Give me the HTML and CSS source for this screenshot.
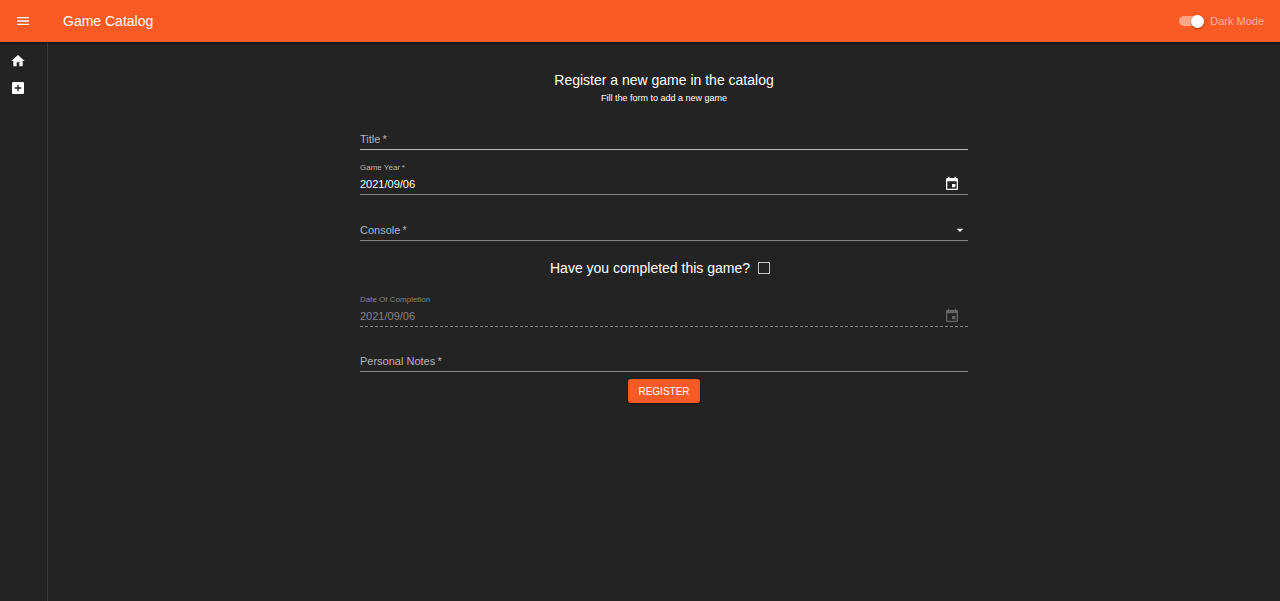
FILE: index.html
```html
<!DOCTYPE html>
<html lang="en">
<head>
<meta charset="utf-8">
<meta name="viewport" content="width=device-width, initial-scale=1">
<title>Game Catalog</title>
<link rel="stylesheet" href="styles.css">
</head>
<body>
<header class="appbar">
  <button class="icon-button" type="button" aria-label="Open menu">
    <svg class="icon" viewBox="0 0 24 24"><path d="M3 18h18v-2H3v2zm0-5h18v-2H3v2zm0-7v2h18V6H3z"/></svg>
  </button>
  <h1 class="appbar-title">Game Catalog</h1>
  <label class="mode"><input class="switch" type="checkbox" role="switch" checked><span>Dark Mode</span></label>
</header>
<div class="layout">
  <nav class="drawer" aria-label="Main">
    <a class="drawer-link" href="#home" aria-label="Home">
      <svg class="icon" viewBox="0 0 24 24"><path d="M10 20v-6h4v6h5v-8h3L12 3 2 12h3v8z"/></svg>
    </a>
    <a class="drawer-link" href="#add" aria-label="Add game">
      <svg class="icon" viewBox="0 0 24 24"><path d="M19 3H5c-1.110 0-2 .9-2 2v14c0 1.100.890 2 2 2h14c1.100 0 2-.9 2-2V5c0-1.100-.9-2-2-2zm-2 10h-4v4h-2v-4H7v-2h4V7h2v4h4v2z"/></svg>
    </a>
  </nav>
  <main class="content">
    <h2 class="heading">Register a new game in the catalog</h2>
    <p class="subtitle">Fill the form to add a new game</p>
    <form class="form">
      <div class="field field-strong">
        <label class="resting-label" for="title">Title&thinsp;*</label>
        <input class="control" id="title" type="text">
      </div>
      <div class="field field-date">
        <label class="small-label" for="year">Game Year&thinsp;*</label>
        <input class="control" id="year" type="text" value="2021/09/06">
        <button class="calendar" type="button" aria-label="Choose date">
          <svg class="icon" viewBox="0 0 24 24"><path d="M17 12h-5v5h5v-5zM16 1v2H8V1H6v2H5c-1.110 0-1.990.9-1.990 2L3 19c0 1.100.890 2 2 2h14c1.100 0 2-.9 2-2V5c0-1.100-.9-2-2-2h-1V1h-2zm3 18H5V8h14v11z"/></svg>
        </button>
      </div>
      <div class="field">
        <label class="resting-label" for="console">Console&thinsp;*</label>
        <select class="control" id="console"><option></option></select>
        <svg class="icon arrow" viewBox="0 0 24 24"><path d="M7 10l5 5 5-5z"/></svg>
      </div>
      <div class="completed">
        <label for="completed">Have you completed this game?</label>
        <input class="checkbox" id="completed" type="checkbox">
      </div>
      <div class="field field-date field-disabled">
        <label class="small-label" for="completion">Date Of Completion</label>
        <input class="control" id="completion" type="text" value="2021/09/06" disabled>
        <button class="calendar" type="button" aria-label="Choose date" disabled>
          <svg class="icon" viewBox="0 0 24 24"><path d="M17 12h-5v5h5v-5zM16 1v2H8V1H6v2H5c-1.110 0-1.990.9-1.990 2L3 19c0 1.100.890 2 2 2h14c1.100 0 2-.9 2-2V5c0-1.100-.9-2-2-2h-1V1h-2zm3 18H5V8h14v11z"/></svg>
        </button>
      </div>
      <div class="field field-date">
        <label class="resting-label" for="notes">Personal Notes&thinsp;*</label>
        <input class="control" id="notes" type="text">
      </div>
      <button class="submit" type="submit">REGISTER</button>
    </form>
  </main>
</div>
</body>
</html>
```
FILE: styles.css
```css
* { box-sizing: border-box; }
body {
  margin: 0;
  min-height: 100vh;
  display: flex;
  flex-direction: column;
  background: #232323;
  color: #fff;
  font-family: "Liberation Sans", Arial, sans-serif;
  font-size: 11px;
}
button, input, select { font: inherit; color: inherit; }
button { border: 0; padding: 0; background: none; cursor: pointer; }
.icon { display: block; width: 16px; height: 16px; fill: currentColor; }

.appbar {
  display: flex;
  align-items: center;
  height: 42px;
  padding: 0 16px 0 15px;
  background: #fa5a23;
  box-shadow: 0 1px 3px rgba(0, 0, 0, .6);
  z-index: 1;
}
.appbar-title {
  margin: 0 auto 0 32px;
  font-size: 14px;
  font-weight: 400;
}
.mode { display: flex; align-items: center; gap: 6px; color: #fdb498; }
.switch {
  appearance: none;
  display: flex;
  align-items: center;
  justify-content: flex-end;
  width: 25px;
  height: 10px;
  margin: 0;
  border-radius: 5px;
  background: #fda586;
}
.switch::before {
  content: "";
  width: 13px;
  height: 13px;
  flex: none;
  border-radius: 50%;
  background: #fff;
  box-shadow: 0 1px 2px rgba(0, 0, 0, .4);
}

.layout { display: flex; flex: 1; }
.drawer {
  width: 48px;
  padding: 5px 0 0 10px;
  border-right: 1px solid #3a3a3a;
}
.drawer-link { display: flex; align-items: center; height: 27px; color: #fff; }
.content {
  flex: 1;
  display: flex;
  flex-direction: column;
  align-items: center;
  padding-top: 28px;
}
.heading { margin: 0; font-size: 14px; font-weight: 400; line-height: 20px; }
.subtitle { margin: 2px 0 0; font-size: 9px; line-height: 12px; }
.form {
  width: 50%;
  padding: 0 4px;
  display: flex;
  flex-direction: column;
}
.field {
  display: grid;
  grid-template-columns: 1fr auto;
  grid-template-rows: 11px 20px;
  margin-top: 14px;
  border-bottom: 1px solid #858585;
}
.field-strong { border-color: #b8b8b8; }
.field-date { margin-top: 13px; }
.small-label {
  grid-area: 1 / 1;
  color: #b5b5b5;
  font-size: 8px;
  line-height: 10px;
}
.resting-label {
  grid-area: 2 / 1;
  color: #b5b5b5;
  line-height: 20px;
  pointer-events: none;
}
.control {
  grid-area: 2 / 1 / 3 / 3;
  appearance: none;
  width: 100%;
  min-width: 0;
  height: 20px;
  padding: 0;
  border: 0;
  outline: 0;
  background: none;
}
.calendar { grid-area: 2 / 2; align-self: center; margin-right: 8px; z-index: 1; }
.arrow { grid-area: 2 / 2; align-self: center; pointer-events: none; }
.field-disabled { border-bottom-style: dashed; }
.field-disabled, .field-disabled .small-label, .field-disabled .control { color: #858585; }
.field-disabled .calendar { color: #666; }
.completed {
  display: flex;
  align-items: center;
  justify-content: center;
  gap: 8px;
  height: 28px;
  margin: 13px 8px 0 0;
  font-size: 14px;
}
.checkbox {
  appearance: none;
  width: 12px;
  height: 12px;
  margin: 0;
  border: 1px solid #c4c4c4;
  border-radius: 1px;
}
.submit {
  align-self: center;
  margin-top: 7px;
  padding: 0 10px;
  height: 24px;
  border-radius: 3px;
  background: #fa5a23;
  font-size: 10px;
  box-shadow: 0 1px 2px rgba(0, 0, 0, .5);
}
```
